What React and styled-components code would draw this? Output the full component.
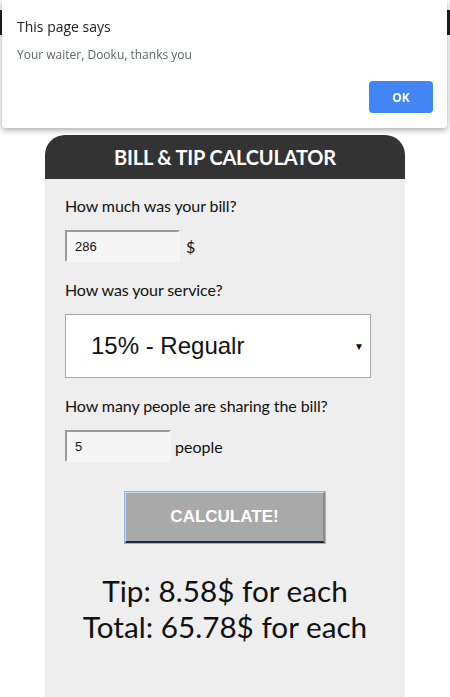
import React from 'react';
import styled, { createGlobalStyle } from 'styled-components';

const GlobalStyle = createGlobalStyle`
    body {
        margin: 0;
        background: #fff;
        font-family: Lato, "Open Sans", sans-serif;
    }
`;

const Page = styled.div`
    display: flex;
    flex-direction: column;
    min-height: 697px;
`;

const PageHeader = styled.div`
    margin-top: 10px;
    height: 25px;
    background: #1e1e1e;
`;

const Card = styled.div`
    width: 360px;
    margin: 100px auto 0;
    flex: 1;
    display: flex;
    flex-direction: column;
`;

const CardHeader = styled.h1`
    margin: 0;
    height: 44px;
    display: flex;
    align-items: center;
    justify-content: center;
    background: #333;
    color: #fff;
    border-radius: 20px 20px 0 0;
    font-size: 20px;
    font-weight: 700;
    letter-spacing: -0.2px;
`;

const CardBody = styled.div`
    flex: 1;
    background: #eee;
    padding: 17px 20px 40px;
    color: #111;
`;

const Label = styled.label`
    display: block;
    font-size: 16px;
    line-height: 20px;
    letter-spacing: -0.1px;
    margin-bottom: 14px;
`;

const Row = styled.div`
    display: flex;
    align-items: center;
    margin-bottom: 18px;
    font-size: 16px;
`;

const TextInput = styled.input`
    box-sizing: border-box;
    width: ${props => props.width}px;
    height: 32px;
    padding: 0 0 0 8px;
    margin-right: ${props => props.gap}px;
    background: #f5f5f5;
    border: 2px solid #f5f5f5;
    border-top-color: #9a9a9a;
    border-left-color: #9a9a9a;
    font-family: Arial, "Liberation Sans", sans-serif;
    font-size: 13px;
    color: #111;
`;

const Select = styled.div`
    box-sizing: border-box;
    width: 306px;
    height: 64px;
    display: flex;
    align-items: center;
    justify-content: space-between;
    padding: 0 6px 0 25px;
    background: #fff;
    border: 1px solid #a9a9a9;
    font-family: Arial, "Liberation Sans", sans-serif;
    font-size: 24px;
    color: #111;

    span {
        font-size: 10px;
    }
`;

const ButtonRow = styled.div`
    display: flex;
    justify-content: center;
    margin-top: 30px;
`;

const CalcButton = styled.button`
    box-sizing: border-box;
    width: 200px;
    height: 51px;
    background: #a9a9a9;
    color: #fff;
    font-family: Arial, "Liberation Sans", sans-serif;
    font-weight: 700;
    font-size: 17px;
    border: 1px solid #c9d6ec;
    border-right: 2px solid #8a8a8a;
    border-bottom: 2px solid #1d2a3c;
    outline: 1px solid #8fb3ee;
`;

const Result = styled.div`
    margin-top: 30px;
    text-align: center;
    font-size: 29.7px;
    line-height: 36px;
    color: #111;
`;

const Dialog = styled.div`
    position: fixed;
    top: 0;
    left: 2px;
    width: 445px;
    box-sizing: border-box;
    padding: 17px 14px 15px 15px;
    background: #fff;
    border-radius: 0 0 3px 3px;
    box-shadow: 0 2px 6px rgba(0, 0, 0, 0.35);
    font-family: "Open Sans", "Noto Sans", sans-serif;
`;

const DialogTitle = styled.div`
    font-size: 14px;
    line-height: 20px;
    color: #202124;
`;

const DialogText = styled.div`
    margin-top: 8px;
    font-size: 12px;
    line-height: 20px;
    color: #5f6368;
`;

const DialogActions = styled.div`
    display: flex;
    justify-content: flex-end;
    margin-top: 16px;
`;

const OkButton = styled.button`
    width: 64px;
    height: 32px;
    border: none;
    border-radius: 4px;
    background: #4285f4;
    color: #fff;
    font-family: "Open Sans", "Noto Sans", sans-serif;
    font-weight: 700;
    font-size: 12px;
`;

export default function App() {
    return <Page>
        <GlobalStyle />
        <PageHeader />
        <Card>
            <CardHeader>BILL &amp; TIP CALCULATOR</CardHeader>
            <CardBody>
                <Label>How much was your bill?</Label>
                <Row>
                    <TextInput width={115} gap={6} defaultValue="286" />$
                </Row>

                <Label>How was your service?</Label>
                <Row>
                    <Select>15% - Regualr<span>▼</span></Select>
                </Row>

                <Label>How many people are sharing the bill?</Label>
                <Row>
                    <TextInput width={106} gap={4} defaultValue="5" />people
                </Row>

                <ButtonRow>
                    <CalcButton>CALCULATE!</CalcButton>
                </ButtonRow>

                <Result>
                    Tip: 8.58$ for each<br />
                    Total: 65.78$ for each
                </Result>
            </CardBody>
        </Card>

        <Dialog>
            <DialogTitle>This page says</DialogTitle>
            <DialogText>Your waiter, Dooku, thanks you</DialogText>
            <DialogActions>
                <OkButton>OK</OkButton>
            </DialogActions>
        </Dialog>
    </Page>;
}
